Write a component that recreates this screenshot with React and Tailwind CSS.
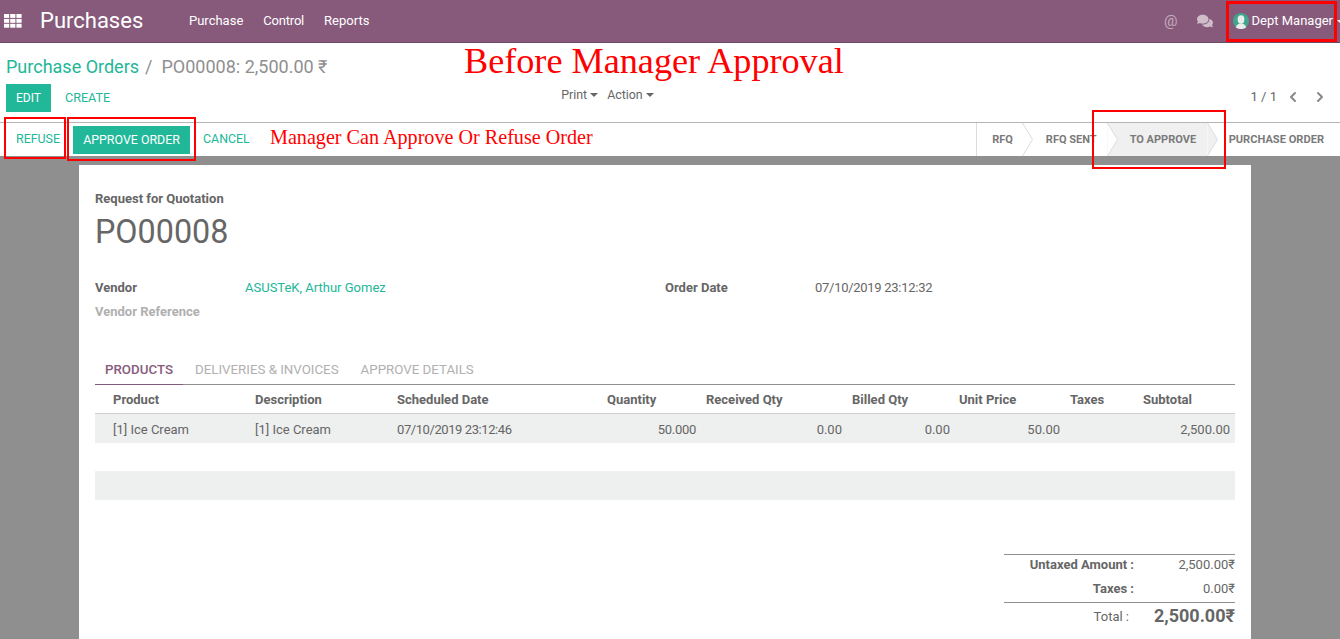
import React from 'react';
import { ChevronLeft, ChevronRight } from 'lucide-react';
import { FaComments } from 'react-icons/fa';

const tableCols = 'grid grid-cols-[155px_142px_210px_99px_146px_108px_110px_73px_97px]';

function AppsIcon() {
  return (
    <svg width="18" height="14" viewBox="0 0 18 14" fill="#fff">
      {[0, 1, 2].map(r =>
        [0, 1, 2].map(c => <rect key={`${r}-${c}`} x={c * 6.2} y={r * 4.9} width="5.2" height="3.9" />)
      )}
    </svg>
  );
}

function Avatar() {
  return (
    <svg width="16" height="16" viewBox="0 0 16 16">
      <circle cx="8" cy="8" r="8" fill="#3fa58c" />
      <ellipse cx="8" cy="6.5" rx="3.4" ry="4.2" fill="#e8ecea" />
      <path d="M2.8 14.5c.6-2.8 2.6-4 5.2-4s4.6 1.2 5.2 4A8 8 0 0 1 8 16a8 8 0 0 1-5.2-1.5z" fill="#e8ecea" />
    </svg>
  );
}

function StageArrow({ fill = '#fff', className = '' }) {
  return (
    <svg width="11" height="33" viewBox="0 0 11 33" className={`block shrink-0 ${className}`}>
      <path d="M0.5 0L10.5 16.5L0.5 33" fill={fill} stroke="#dcdcdc" />
    </svg>
  );
}

// red marks that were drawn on top of the screenshot
function RedBox({ className }) {
  return <div className={`pointer-events-none absolute border-[#f00] ${className}`} />;
}

export default function App() {
  return (
    <div className="relative h-[639px] w-[1340px] overflow-hidden bg-[#8f8f8f] font-['Roboto',sans-serif] text-[13px] text-[#666]">
      {/* top bar */}
      <nav className="flex h-[43px] items-center border-b border-[#6f4a66] bg-[#875a7b] text-white">
        <div className="ml-1 flex w-[36px] shrink-0"><AppsIcon /></div>
        <div className="w-[149px] shrink-0 text-[22px] leading-none">Purchases</div>
        <div className="flex gap-[20px] text-[13px]">
          <span>Purchase</span>
          <span className="tracking-[-0.2px]">Control</span>
          <span>Reports</span>
        </div>
        <div className="ml-auto mr-[-2px] flex items-center">
          <span className="mr-[19px] text-[15px] text-white/50">@</span>
          <FaComments className="mr-[20px] text-[16px] text-white/60" />
          <Avatar />
          <span className="ml-[3px] whitespace-nowrap">Dept Manager</span>
          <span className="ml-[4px] mr-[-1px] h-0 w-0 border-x-[3px] border-t-[3px] border-x-transparent border-t-white" />
        </div>
      </nav>

      {/* breadcrumb and buttons */}
      <div className="h-[79px] bg-white">
        <div className="flex h-[41px] items-end pb-[6px] pl-[6px] text-[18px] leading-[22px]">
          <span className="text-[#21b799]">Purchase Orders</span>
          <span className="ml-[6px] text-[#8f8f8f]">/</span>
          <span className="ml-[9px] text-[#8f8f8f]">PO00008: 2,500.00 ₹</span>
        </div>
        <div className="flex items-start pl-[6px]">
          <button className="h-[28px] w-[45px] bg-[#21b799] text-[12px] text-white">EDIT</button>
          <button className="ml-[14px] h-[28px] text-[12.6px] text-[#21b799]">CREATE</button>
          <div className="ml-[451px] flex gap-[9px] pt-[3px] text-[12.4px] leading-[16px]">
            <span className="flex items-center gap-[3px]">Print<i className="h-0 w-0 border-x-[4px] border-t-[4px] border-x-transparent border-t-[#666]" /></span>
            <span className="flex items-center gap-[3px]">Action<i className="h-0 w-0 border-x-[4px] border-t-[4px] border-x-transparent border-t-[#666]" /></span>
          </div>
          <div className="ml-auto flex items-center pr-[12px] pt-[5px]">
            <span className="mr-[8px] text-[13px] leading-[16px]">1 / 1</span>
            <ChevronLeft size={16} strokeWidth={3} className="text-[#888]" />
            <ChevronRight size={16} strokeWidth={3} className="ml-[11px] text-[#888]" />
          </div>
        </div>
      </div>

      {/* status bar */}
      <div className="flex h-[34px] items-center border-t border-[#b5b5b5] bg-white text-[12.4px]">
        <span className="ml-[16px] w-[44px] text-[#21b799]">REFUSE</span>
        <button className="ml-[13px] h-[28px] w-[117px] bg-[#21b799] pt-[1px] text-white">APPROVE ORDER</button>
        <span className="ml-[13px] text-[#21b799]">CANCEL</span>
        <div className="ml-auto flex h-[33px] items-center border-l border-[#dcdcdc] text-[11px] font-bold text-[#7a7a7a]">
          <span className="pl-[15px] pr-[9px] pt-[1px]">RFQ</span>
          <StageArrow />
          <span className="whitespace-nowrap pl-[13px] pr-[10px] pt-[1px]">RFQ SENT</span>
          <StageArrow className="bg-[#f0f0f0]" />
          <div className="h-[33px] w-[89px] shrink-0 whitespace-nowrap bg-[#f0f0f0] pl-[12px] leading-[33px]">TO APPROVE</div>
          <StageArrow fill="#f0f0f0" />
          <span className="whitespace-nowrap pl-[11px] pr-[16px] pt-[1px] text-[11.1px]">PURCHASE ORDER</span>
        </div>
      </div>

      {/* form sheet */}
      <div className="mx-[79px] mt-[9px] h-[500px] w-[1172px] bg-white px-[16px] pt-[26px]">
        <div className="text-[13px] font-bold leading-[16px]">Request for Quotation</div>
        <h1 className="mt-[5px] text-[32.3px] leading-[40px]">PO00008</h1>

        <div className="mt-[24px] grid grid-cols-[150px_420px_150px_1fr] leading-[24px]">
          <b>Vendor</b>
          <span className="text-[#21b799]">ASUSTeK, Arthur Gomez</span>
          <b>Order Date</b>
          <span className="tracking-[-0.28px]">07/10/2019 23:12:32</span>
          <b className="text-[#b0b0b0]">Vendor Reference</b>
        </div>

        {/* tabs */}
        <div className="mt-[30px] flex h-[31px] border-b border-[#8f8f8f] text-[13.3px] leading-[31px] text-[#b0b0b0]">
          <span className="mb-[-1px] h-[31px] w-[88px] border-b border-[#875a7b] pl-[10px] font-medium text-[#875a7b]">PRODUCTS</span>
          <span className="ml-[12px]">DELIVERIES &amp; INVOICES</span>
          <span className="ml-[22px]">APPROVE DETAILS</span>
        </div>

        {/* order lines */}
        <div className={`${tableCols} h-[29px] border-b border-[#cfcfcf] text-[13px] font-bold leading-[29px]`}>
          <span className="pl-[18px]">Product</span>
          <span className="pl-[5px]">Description</span>
          <span className="pl-[5px]">Scheduled Date</span>
          <span className="pl-[5px]">Quantity</span>
          <span className="pl-[5px]">Received Qty</span>
          <span className="pl-[5px]">Billed Qty</span>
          <span className="pl-[4px]">Unit Price</span>
          <span className="pl-[5px]">Taxes</span>
          <span className="pl-[5px]">Subtotal</span>
        </div>
        <div className={`${tableCols} h-[29px] bg-[#eeefef] leading-[31px]`}>
          <span className="pl-[18px]">[1] Ice Cream</span>
          <span className="pl-[5px]">[1] Ice Cream</span>
          <span className="pl-[5px] tracking-[-0.42px]">07/10/2019 23:12:46</span>
          <span className="pr-[5px] text-right tracking-[-0.3px]">50.000</span>
          <span className="pr-[5px] text-right">0.00</span>
          <span className="pr-[5px] text-right">0.00</span>
          <span className="pr-[5px] text-right">50.00</span>
          <span />
          <span className="pr-[5px] text-right">2,500.00</span>
        </div>
        <div className="mt-[28px] h-[29px] bg-[#eeefef]" />

        {/* totals */}
        <div className="ml-auto mt-[54px] w-[231px]">
          <div className="border-y border-[#8f8f8f] pb-[3px]">
            <div className="flex h-[19px] items-center justify-between">
              <b className="w-[130px] text-right text-[13px]">Untaxed Amount :</b>
              <span>2,500.00₹</span>
            </div>
            <div className="mt-[4px] flex h-[21px] items-center justify-between">
              <b className="w-[130px] text-right text-[13px]">Taxes :</b>
              <span>0.00₹</span>
            </div>
          </div>
          <div className="flex h-[26px] items-center justify-between">
            <span className="w-[125px] pt-[2px] text-right">Total :</span>
            <b className="text-[18px] leading-[24px]">2,500.00₹</b>
          </div>
        </div>
      </div>

      {/* annotations over the screenshot */}
      <div className="absolute left-[464px] top-[39px] whitespace-nowrap font-['Liberation_Serif',serif] text-[36.2px] leading-[44px] text-[#f00]">Before Manager Approval</div>
      <div className="absolute left-[270px] top-[125px] whitespace-nowrap font-['Liberation_Serif',serif] text-[20.15px] leading-[24px] text-[#f00]">Manager Can Approve Or Refuse Order</div>
      <RedBox className="left-[1226px] top-[1px] h-[41px] w-[111px] border-[3px]" />
      <RedBox className="left-[4px] top-[117px] h-[42px] w-[62px] border-2" />
      <RedBox className="left-[67px] top-[117px] h-[44px] w-[129px] border-2" />
      <RedBox className="left-[1092px] top-[110px] h-[59px] w-[134px] border-2" />
    </div>
  );
}
